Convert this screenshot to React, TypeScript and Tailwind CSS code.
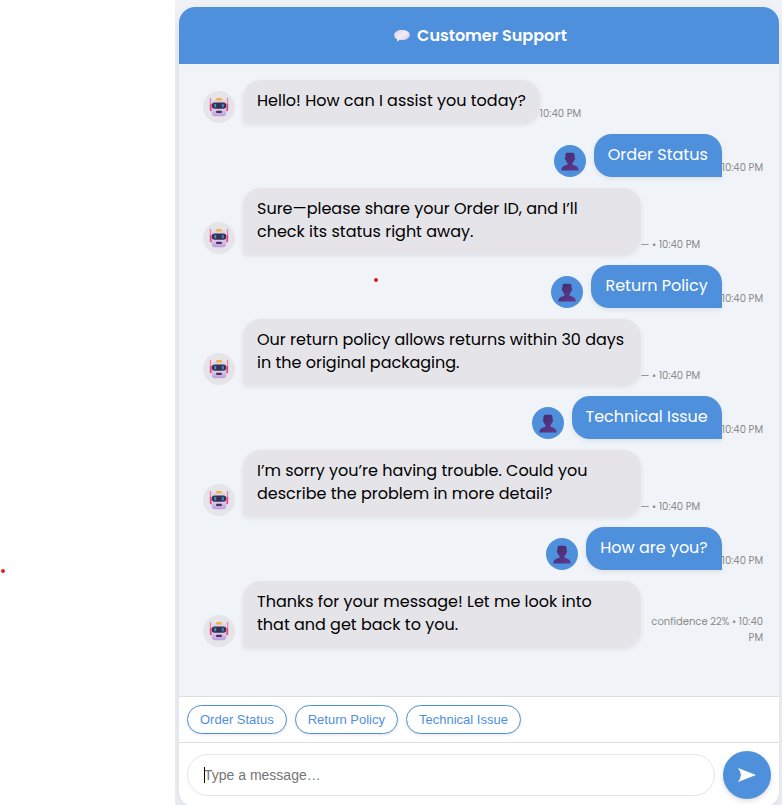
type Message = {
  from: 'bot' | 'user';
  text: string;
  meta: string;
};

const messages: Message[] = [
  { from: 'bot', text: 'Hello! How can I assist you today?', meta: '10:40 PM' },
  { from: 'user', text: 'Order Status', meta: '10:40 PM' },
  { from: 'bot', text: 'Sure—please share your Order ID, and I’ll check its status right away.', meta: '— • 10:40 PM' },
  { from: 'user', text: 'Return Policy', meta: '10:40 PM' },
  { from: 'bot', text: 'Our return policy allows returns within 30 days in the original packaging.', meta: '— • 10:40 PM' },
  { from: 'user', text: 'Technical Issue', meta: '10:40 PM' },
  { from: 'bot', text: 'I’m sorry you’re having trouble. Could you describe the problem in more detail?', meta: '— • 10:40 PM' },
  { from: 'user', text: 'How are you?', meta: '10:40 PM' },
  { from: 'bot', text: 'Thanks for your message! Let me look into that and get back to you.', meta: 'confidence 22% • 10:40 PM' },
];

const quickReplies = ['Order Status', 'Return Policy', 'Technical Issue'];

function RobotIcon() {
  return (
    <svg viewBox="0 0 20 20" className="size-5" aria-hidden="true">
      <defs>
        <linearGradient id="face" x1="0" y1="0" x2="0" y2="1">
          <stop offset="0" stopColor="#ddd6e6" />
          <stop offset="0.6" stopColor="#d9c9ea" />
          <stop offset="1" stopColor="#bd9cd8" />
        </linearGradient>
      </defs>
      <rect x="0.8" y="0.8" width="1.4" height="9" rx="0.7" fill="#ee86a8" />
      <rect x="17.8" y="0.8" width="1.4" height="9" rx="0.7" fill="#ee86a8" />
      <rect x="0.8" y="6.8" width="2.6" height="7.4" rx="1.2" fill="#e8477f" />
      <rect x="16.6" y="6.8" width="2.6" height="7.4" rx="1.2" fill="#e8477f" />
      <rect x="2.6" y="2.6" width="14.8" height="16.6" rx="3.6" fill="url(#face)" />
      <rect x="7" y="1" width="6" height="2.4" rx="0.8" fill="#f2b544" />
      <rect x="2.8" y="5.600" width="14.4" height="6.200" rx="2.8" fill="#38304f" />
      <rect x="5.2" y="6.800" width="2" height="3.800" rx="1" fill="#3d8fd0" />
      <rect x="12.800" y="6.800" width="2" height="3.800" rx="1" fill="#3d8fd0" />
      <rect x="7.200" y="13.800" width="5.600" height="2.200" rx="0.5" fill="#43355f" />
    </svg>
  );
}

function PersonIcon() {
  return (
    <svg viewBox="0 0 20 20" className="size-5" aria-hidden="true">
      <defs>
        <linearGradient id="bust" x1="0" y1="0" x2="1" y2="1">
          <stop offset="0" stopColor="#432a6c" />
          <stop offset="1" stopColor="#623a90" />
        </linearGradient>
      </defs>
      <path
        d="M5.600 3Q6 1.800 7.400 1.800h5.200q1.400 0 1.800 1.200l.3 3.500q.6.400.4 1.500-.2 1.100-.9 1.300-.5 1.900-1.800 3v1.200l3.600 1.500q2.300.8 2.800 4.500H1.200q.5-3.700 2.800-4.500l3.600-1.500v-1.200Q6.300 11.200 5.800 9.300q-.7-.2-.9-1.300-.2-1.100.4-1.500Z"
        fill="url(#bust)"
      />
    </svg>
  );
}

function SpeechIcon() {
  return (
    <svg viewBox="0 0 20 14" className="h-[14px] w-5" aria-hidden="true">
      <defs>
        <linearGradient id="speech" x1="0" y1="0" x2="1" y2="1">
          <stop offset="0" stopColor="#dccfe6" />
          <stop offset="0.5" stopColor="#f1ecf4" />
          <stop offset="1" stopColor="#cfbcdc" />
        </linearGradient>
      </defs>
      <path
        d="M11 1c4.600 0 7.800 2.100 7.800 5s-3.200 5-7.800 5q-1.300 0-2.400-.2Q7.400 12.400 5.600 12.600q.7-.9.5-2.400C4.300 9.300 3.200 7.800 3.200 6c0-2.900 3.200-5 7.800-5Z"
        fill="url(#speech)"
      />
    </svg>
  );
}

function MessageRow({ message }: { message: Message }) {
  const isBot = message.from === 'bot';
  return (
    <li className={isBot ? 'flex items-end justify-start' : 'flex items-end justify-end'}>
      <span
        className={
          isBot
            ? 'mx-2 flex size-8 shrink-0 items-center justify-center rounded-full bg-[#e5e4e9]'
            : 'mx-2 flex size-8 shrink-0 items-center justify-center rounded-full bg-[#4f90dd]'
        }
      >
        {isBot ? <RobotIcon /> : <PersonIcon />}
      </span>
      <p
        className={
          isBot
            ? 'max-w-[70%] shrink-0 rounded-[18px] rounded-bl-[4px] bg-[#e5e4e9] px-[14px] pt-[9px] pb-[11px] text-black shadow-[0_2px_5px_rgba(0,0,0,0.08)]'
            : 'max-w-[70%] shrink-0 rounded-[18px] rounded-br-none bg-[#4f90dd] px-[14px] pt-[9px] pb-[11px] text-white shadow-[0_2px_5px_rgba(0,0,0,0.08)]'
        }
      >
        {message.text}
      </p>
      <span className="mb-px text-right text-[10px] leading-4 text-[#8a8a8a]">{message.meta}</span>
    </li>
  );
}

export default function App() {
  return (
    <div className="relative flex h-screen overflow-hidden bg-white font-['Poppins','Inter',sans-serif] text-[16px] leading-[23px]">
      <div className="w-[175px] shrink-0" />
      <main className="min-w-0 flex-1 overflow-hidden bg-[#f0f4f8] pt-[7px] pr-[3px] pl-1">
        <section className="mx-auto flex max-w-[600px] flex-col overflow-hidden rounded-[16px] bg-white shadow-[0_8px_24px_rgba(0,0,0,0.1)]">
          <header className="flex items-center justify-center gap-[6px] bg-[#4f90dd] py-[17px] text-white">
            <SpeechIcon />
            <h1 className="font-semibold">Customer Support</h1>
          </header>

          <ul className="flex flex-col gap-[11px] bg-[#f0f4f8] px-4 pt-4 pb-[49px]">
            {messages.map((message, index) => (
              <MessageRow key={index} message={message} />
            ))}
          </ul>

          <div className="flex gap-2 border-t border-[#dddddd] p-2 font-['Liberation_Sans',Arial,sans-serif]">
            {quickReplies.map((reply) => (
              <button
                key={reply}
                type="button"
                className="rounded-full border border-[#4f90dd] bg-white px-3 py-[5px] text-[13px] leading-[17px] text-[#4f90dd] shadow-[0_1px_3px_rgba(0,0,0,0.1)]"
              >
                {reply}
              </button>
            ))}
          </div>

          <form
            className="flex items-center gap-2 border-t border-[#dddddd] p-2 font-['Liberation_Sans',Arial,sans-serif]"
            onSubmit={(event) => event.preventDefault()}
          >
            <div className="relative min-w-0 flex-1">
              <input
                type="text"
                aria-label="Message"
                placeholder="Type a message…"
                className="block h-[42px] w-full rounded-full border border-[#e5e5e5] bg-white px-4 text-[14px] text-black outline-none placeholder:text-[#757575]"
              />
              <span className="absolute top-[13px] left-[17px] h-4 w-px bg-black" />
            </div>
            <button
              type="submit"
              aria-label="Send"
              className="flex size-12 shrink-0 items-center justify-center rounded-full bg-[#4f90dd] text-white shadow-[0_2px_5px_rgba(0,0,0,0.15)]"
            >
              <svg viewBox="0 0 18 14" className="h-[14px] w-[18px]" fill="currentColor" aria-hidden="true">
                <path d="M0 0 18 7 0 14Q2.500 10.500 3 7 2.500 3.500 0 0Z" />
              </svg>
            </button>
          </form>
        </section>
      </main>
      <span className="absolute top-[278px] left-[374px] size-1 rounded-full bg-[#e81c23]" />
      <span className="absolute top-[569px] left-px size-1 rounded-full bg-[#e81c23]" />
    </div>
  );
}
